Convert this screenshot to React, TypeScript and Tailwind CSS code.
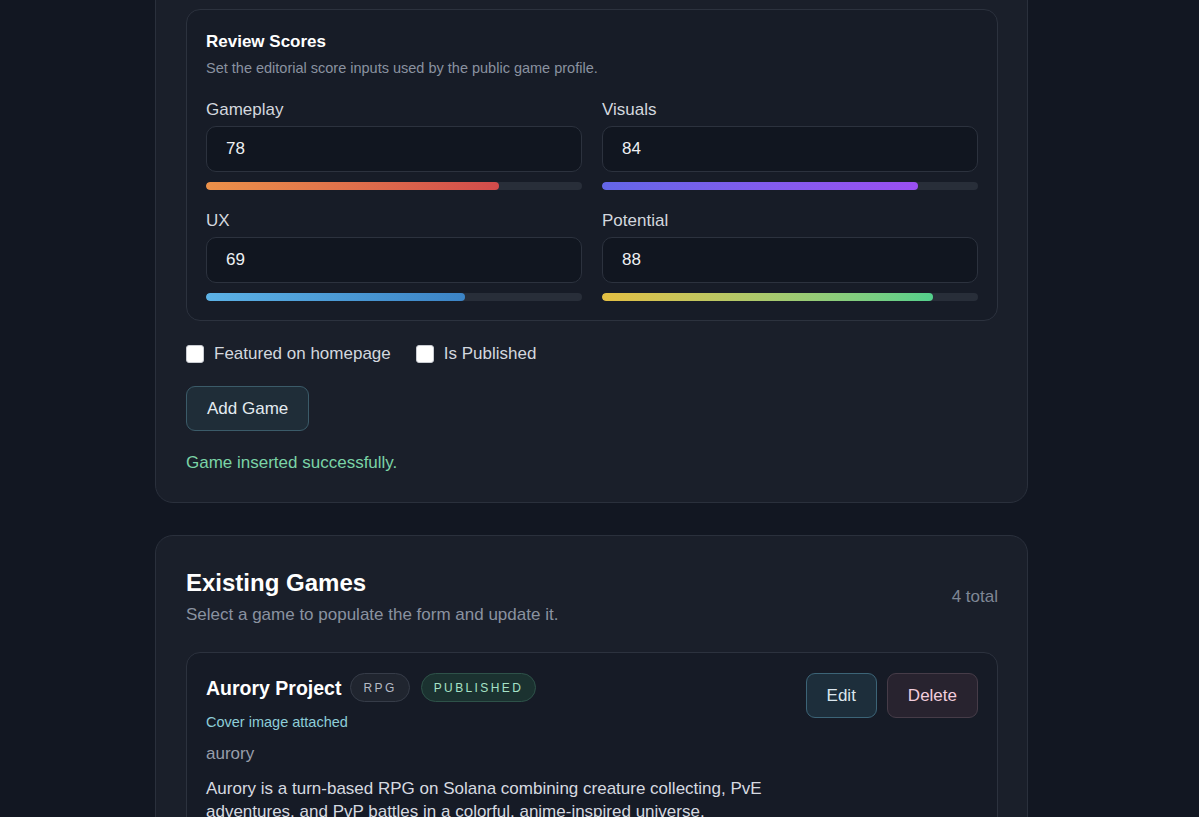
import React from 'react';

type Score = { label: string; value: number; bar: string };

const SCORES: Score[] = [
  { label: 'Gameplay', value: 78, bar: 'bg-gradient-to-r from-[#ec9149] to-[#d24b4b]' },
  { label: 'Visuals', value: 84, bar: 'bg-gradient-to-r from-[#6366e8] to-[#9a4ff2]' },
  { label: 'UX', value: 69, bar: 'bg-gradient-to-r from-[#5cb2e6] to-[#3c84c6]' },
  { label: 'Potential', value: 88, bar: 'bg-gradient-to-r from-[#e3bf42] to-[#52d08c]' },
];

const ScoreField: React.FC<{ score: Score }> = ({ score }) => (
  <div className="flex flex-col">
    <label className="pt-px text-[17px] leading-6 text-[#d3d7de]">{score.label}</label>
    <input
      readOnly
      value={score.value}
      className="mt-[4px] h-[46px] w-full rounded-[10px] border border-[#2c323e] bg-[#111620] px-[19px] text-[17px] text-[#eef0f3] outline-none"
    />
    <div className="mt-[10px] h-[8px] w-full overflow-hidden rounded-full bg-[#282e39]">
      <div className={`h-full rounded-full ${score.bar}`} style={{ width: `${score.value}%` }} />
    </div>
  </div>
);

const Checkbox: React.FC<{ label: string }> = ({ label }) => (
  <label className="flex items-center gap-[10px] text-[17px] leading-6 text-[#d3d7de]">
    <span className="h-[18px] w-[18px] rounded-[3px] border border-[#c9ccd2] bg-white" />
    {label}
  </label>
);

export default function App() {
  return (
    <div
      className="h-screen overflow-hidden bg-[#121722] pl-[155px] text-white"
      style={{ fontFamily: '"Liberation Sans", Arial, sans-serif' }}
    >
      <div className="w-[873px]">
        {/* add / edit form (scrolled) */}
        <section className="-mt-[22px] rounded-[18px] border border-[#2a303c] bg-[#1a1f2a] pl-[30px] pr-[29px] pt-[30px] pb-[27px]">
          <div className="rounded-[14px] border border-[#2c323e] bg-[#171c27] px-[19px] pt-5 pb-[19px]">
            <h3 className="text-[17px] font-bold leading-6 text-white">Review Scores</h3>
            <p className="mt-1 text-[14.5px] leading-5 text-[#8a92a0]">
              Set the editorial score inputs used by the public game profile.
            </p>
            <div className="mt-[19px] grid grid-cols-2 gap-x-5 gap-y-[18px]">
              {SCORES.map((s) => (
                <ScoreField key={s.label} score={s} />
              ))}
            </div>
          </div>

          <div className="mt-[21px] flex items-center gap-[25px]">
            <Checkbox label="Featured on homepage" />
            <Checkbox label="Is Published" />
          </div>

          <button className="mt-5 h-[45px] rounded-[9px] border border-[#3b5b69] bg-[#1f2d38] px-5 text-[17px] text-[#e3ebf0]">
            Add Game
          </button>

          <p className="mt-5 text-[17px] leading-6 text-[#7ad3a6]">Game inserted successfully.</p>
        </section>

        {/* existing games */}
        <section className="mt-8 rounded-[18px] border border-[#2a303c] bg-[#1a1f2a] pl-[30px] pr-[29px] pt-[31px] pb-[30px]">
          <div className="flex items-center justify-between">
            <div>
              <h2 className="text-2xl font-bold leading-8 text-white">Existing Games</h2>
              <p className="mt-1 text-[17px] leading-6 text-[#8a92a0]">
                Select a game to populate the form and update it.
              </p>
            </div>
            <span className="text-[17px] text-[#7f8795]">4 total</span>
          </div>

          <div className="mt-[25px] rounded-[14px] border border-[#2c323e] bg-[#161b26] px-[19px] pt-5 pb-5">
            <div className="flex items-start justify-between">
              <div>
                <div className="flex items-center gap-[9px]">
                  <h3 className="text-[19.5px] font-bold leading-7 text-white">Aurory Project</h3>
                  <span className="flex h-[29px] items-center rounded-full border border-[#363c48] bg-[#20252f] px-3 text-[12px] tracking-[0.2em] text-[#b5bbc5]">
                    RPG
                  </span>
                  <span className="ml-[2px] flex h-[29px] items-center rounded-full border border-[#2e5249] bg-[#1b3230] px-3 text-[12px] tracking-[0.2em] text-[#a6e2c7]">
                    PUBLISHED
                  </span>
                </div>
                <p className="mt-[10px] text-[14.5px] leading-5 text-[#8dcdd8]">Cover image attached</p>
                <p className="mt-[10px] text-[17px] leading-6 text-[#979eaa]">aurory</p>
                <p className="mt-[11px] max-w-[590px] text-[17px] leading-[23px] text-[#d6dae0]">
                  Aurory is a turn-based RPG on Solana combining creature collecting, PvE adventures, and PvP
                  battles in a colorful, anime-inspired universe.
                </p>
              </div>
              <div className="flex gap-[10px]">
                <button className="h-[45px] rounded-[9px] border border-[#3c6477] bg-[#1d2e3b] px-5 text-[17px] text-[#dbe6ee]">
                  Edit
                </button>
                <button className="h-[45px] rounded-[9px] border border-[#463c48] bg-[#28232f] px-5 text-[17px] text-[#f2cddd]">
                  Delete
                </button>
              </div>
            </div>
          </div>
        </section>
      </div>
    </div>
  );
}
